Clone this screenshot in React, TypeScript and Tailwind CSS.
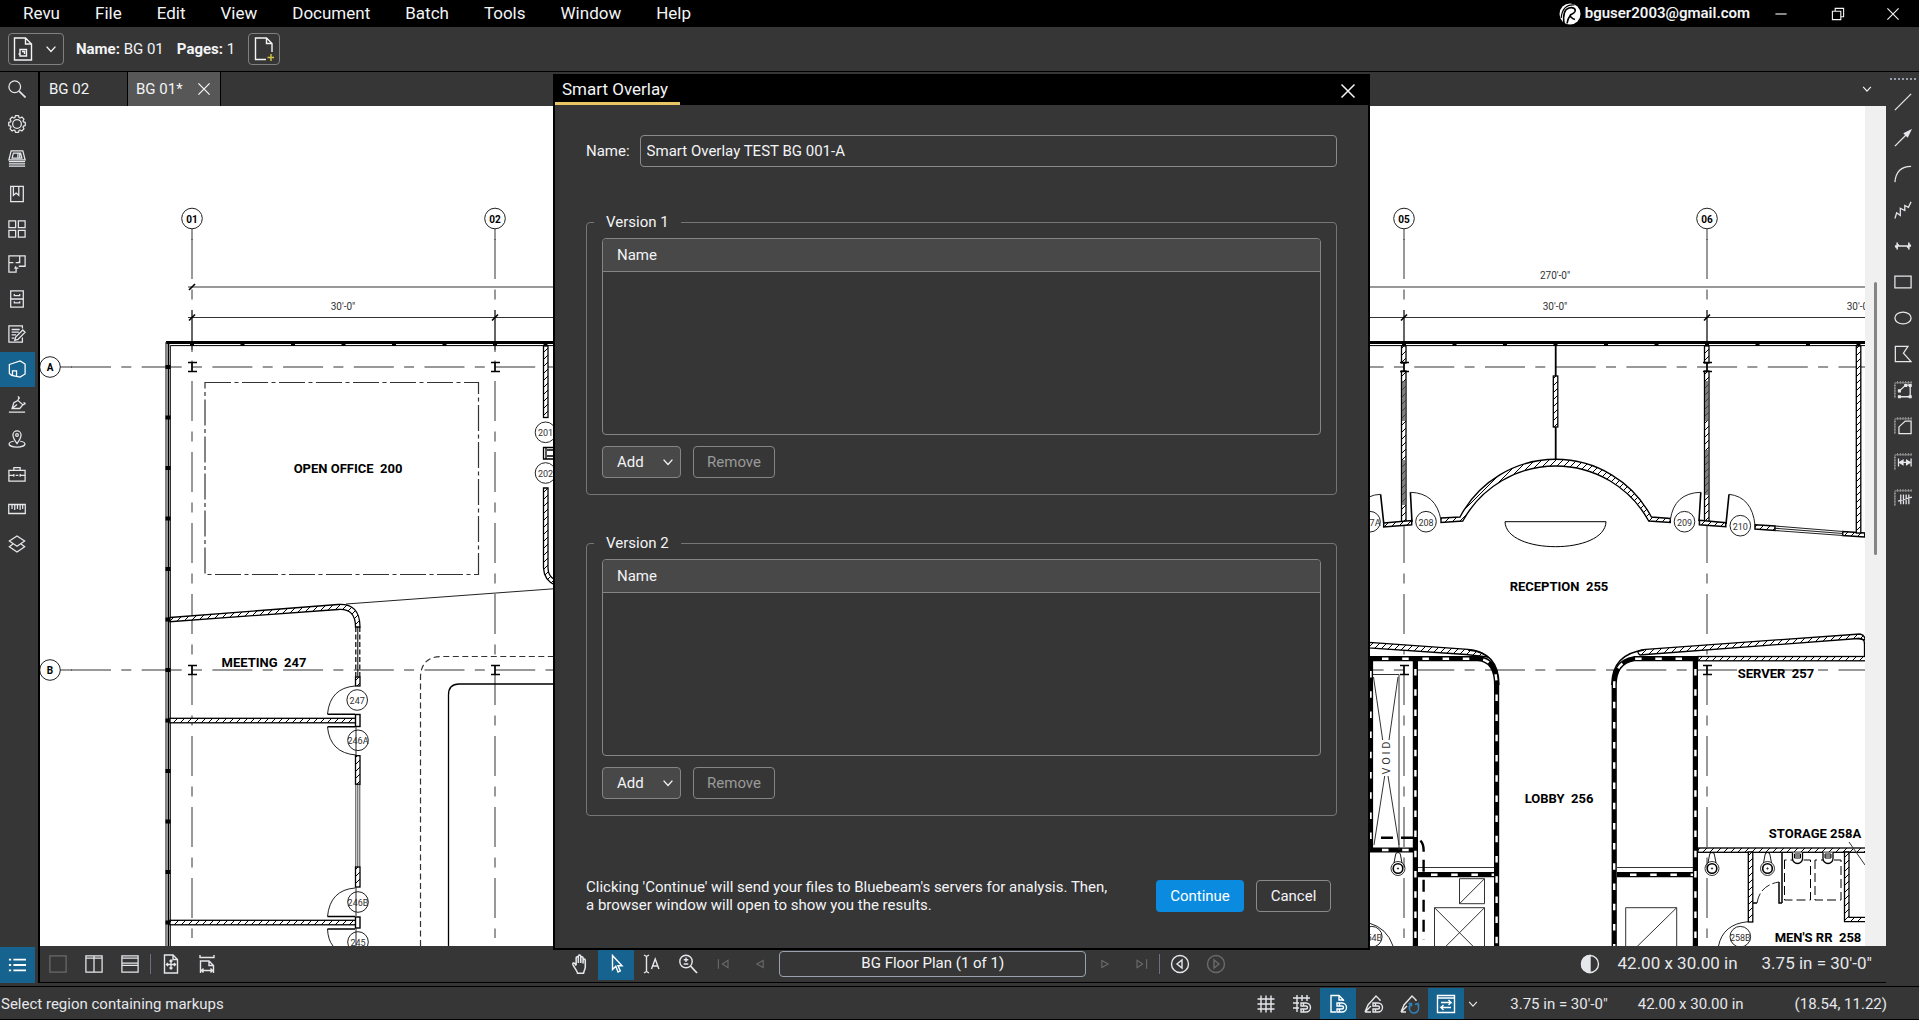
import React from "react";

type IconProps = { children: React.ReactNode; size?: number; sw?: number };

function Icon({ children, size = 20, sw = 1.4 }: IconProps) {
  return (
    <svg
      width={size}
      height={size}
      viewBox="0 0 20 20"
      fill="none"
      stroke="currentColor"
      strokeWidth={sw}
      aria-hidden="true"
      className="shrink-0"
    >
      {children}
    </svg>
  );
}

const Chevron = ({ size = 20 }: { size?: number }) => (
  <Icon size={size} sw={1.7}>
    <path d="M4.500 7l5.500 6L15.500 7" />
  </Icon>
);

const Cross = () => (
  <Icon sw={1.5}>
    <path d="M3.500 3.500l13 13M16.500 3.500l-13 13" />
  </Icon>
);

/* ---------- Panel icons (left rail) ---------- */

const panels: { name: string; icon: React.ReactNode; active?: boolean }[] = [
  { name: "Search", icon: <><circle cx="7.500" cy="7.500" r="6.500" /><path d="M12.300 12.300L19.500 19.500" strokeWidth="1.800" /></> },
  {
    name: "Properties",
    icon: (
      <>
        <circle cx="10" cy="10" r="4.800" />
        <path strokeLinejoin="round" d="M8.300 .8h3.400l.6 2.100 1 .4 2.100-1 2.300 2.300-1 2.100.4 1 2.100.6v3.400l-2.100.6-.4 1 1 2.100-2.300 2.300-2.100-1-1 .4-.6 2.100H8.300l-.6-2.100-1-.4-2.100 1-2.300-2.300 1-2.100-.4-1L.8 11.700V8.300l2.100-.6.4-1-1-2.100 2.300-2.300 2.100 1 1-.4z" />
      </>
    ),
  },
  { name: "File Access", icon: <><path d="M3.500 1h13l2.500 10H1z" /><path d="M6 3.500h8l1.500 5.500h-11zM11 4v5M13 4v5M1 13h18M1 15.500h18M1 18h18" /></> },
  { name: "Bookmarks", icon: <><path d="M3 1.500h14v17H3z" /><path d="M6 1.500v10l3-2.500 3 2.500v-10" /></> },
  { name: "Thumbnails", icon: <path d="M1 1h7.500v7.500H1zM11.500 1H19v7.500h-7.500zM1 11.500h7.500V19H1zM11.500 11.500H19V19h-7.500z" /> },
  { name: "Spaces", icon: <path d="M1 9V1h18v11.500h-7M1 8.500V19h8v-4.500h-2M1 8.500h5M8.500 8.500H13V1M12.500 8.500V7M8.500 12.500v2h3" /> },
  { name: "Sets", icon: <><path d="M3 1h14v18H3zM3 10h14" /><path d="M7 4.500v1.700h6V4.500M7 12.500v1.700h6v-1.700" /></> },
  { name: "Markups", icon: <><path d="M16 4V1H1v18h15v-5" /><path d="M4 5h9M4 8h8M4 11h5M4 14.500h3M16.500 5.500l2.500 2.500-8 8-3.500 1 1-3.500z" /></> },
  { name: "Compare", icon: <><path d="M1.500 5L13.500 1 19 4.500v11L13.500 19 4 17l-2.500-2z" /><path d="M5 17v-5h4.500v6" /></>, active: true },
  { name: "Signatures", icon: <path d="M1 19h18M4.500 15L6.500 8.500 11 6l5.500 5L13 15zM4.500 15l5.500-4.500M11 6l1.500-4M11 1.500L13 4M16.500 11l3-2M17.500 8l1.500 2.500" /> },
  { name: "Places", icon: <><path d="M10 15C7 11 5.500 9 5.500 5.500a4.500 4.500 0 019 0C14.500 9 13 11 10 15z" /><circle cx="10" cy="5.500" r="1.500" /><path d="M6.500 12.500c-3 .4-5.300 1.300-5.300 3 0 2 4 3.500 8.800 3.500s8.800-1.500 8.800-3.500c0-1.700-2.300-2.600-5.300-3" /></> },
  { name: "Tool Chest", icon: <path d="M1 6h18v12H1zM6.500 6V3h7v3M1 11.500h5M8.500 11.500h3M13.500 11.500H19M6.500 10v3M13.500 10v3" /> },
  { name: "Measurements", icon: <path d="M.8 5h18.400v10H.8zM4.500 5v5M7.500 5v6M10.500 5v5M13.500 5v6M16.300 5v5" /> },
  { name: "Layers", icon: <><path d="M10 1l8.500 5.700L10 12.500 1.500 6.700z" /><path d="M5.500 10L1.500 13l8.500 6 8.500-6-4-3" /></> },
];

function LeftRail() {
  return (
    <nav aria-label="Panels" className="flex w-10 shrink-0 flex-col border-r-2 border-black bg-[#363636] text-gray-200">
      {panels.map((p) => (
        <button
          key={p.name}
          aria-label={p.name}
          className={
            p.active
              ? "flex h-[35px] w-[35px] shrink-0 items-center justify-center bg-[#17638f] pr-0.5 pb-0.5 text-white"
              : "flex h-[35px] w-[35px] shrink-0 items-center justify-center pr-0.5 pb-0.5"
          }
        >
          <Icon size={18}>{p.icon}</Icon>
        </button>
      ))}
      <button aria-label="Markups list" className="mt-auto flex h-9 w-[35px] items-center justify-center bg-[#17638f] pr-0.5 text-white">
        <Icon size={18} sw={2}>
          <path d="M6 4h14M6 10h14M6 16h14M1 4h2.500M1 10h2.500M1 16h2.500" />
        </Icon>
      </button>
    </nav>
  );
}

/* ---------- Markup tools (right rail) ---------- */

const ruler = (
  <path stroke="#9a9a9a" strokeWidth="1" d="M1 19V2h19M0 5h2M0 8h2M0 11h2M0 14h2M0 17h2M4 0v3M7 0v3M10 0v3M13 0v3M16 0v3M19 0v3" />
);

const tools: { name: string; icon: React.ReactNode }[] = [
  { name: "Line", icon: <path d="M1 19L19 1" /> },
  { name: "Arrow", icon: <><path d="M1 19L15 5" /><path fill="currentColor" d="M18.500 1.500l-7 3.500 3.500 3.500z" /></> },
  { name: "Arc", icon: <path d="M1 19C2 8 8 1.500 19 1.500" /> },
  { name: "Polyline", icon: <path d="M1 19.500l2-6.500 4 3V8l5 2.500V5l4 2 3-6" /> },
  { name: "Dimension", icon: <path strokeWidth="1.700" d="M1 10h18M3.500 6v8M16.500 6v8M1.500 11.500l4-3M14.500 11.500l4-3" /> },
  { name: "Rectangle", icon: <path d="M1 3.500h18v13H1z" /> },
  { name: "Ellipse", icon: <ellipse cx="10" cy="10" rx="9" ry="6.500" /> },
  { name: "Polygon", icon: <path d="M1.500 1.500h14l-5 7.500 8.500 9.500H1.500z" /> },
  { name: "Perimeter", icon: <>{ruler}<path d="M6 11l7-6.500h5v13H6" /><path fill="currentColor" d="M5 10h2v2H5zM12 4h2v2h-2zM17 4h2v2h-2zM17 16.500h2v2h-2zM5 16.500h2v2H5z" /></> },
  { name: "Area", icon: <>{ruler}<path d="M5.500 18.500V11l7-6.500h6.500v14z" /></> },
  { name: "Length", icon: <>{ruler}<path d="M5 6v9M19 6v9M6 10.500h12" /><path fill="currentColor" d="M6 10.500l4-2.500v5zM18 10.500l-4-2.500v5z" /></> },
  { name: "Count", icon: <>{ruler}<path d="M7.500 6v11M10.500 6v11M13.500 6v11M16.500 6v11M4.500 13.500L20 9" /></> },
];

function RightRail() {
  return (
    <aside aria-label="Tools" className="flex w-[33px] shrink-0 flex-col items-center bg-[#363636] pt-1.5 text-gray-200">
      <div className="w-[26px] border-t-2 border-dotted border-gray-400" />
      <div className="mt-1 flex flex-col">
        {tools.map((t) => (
          <button key={t.name} aria-label={t.name} className="flex h-9 w-[33px] items-center justify-center">
            <Icon size={18}>{t.icon}</Icon>
          </button>
        ))}
      </div>
    </aside>
  );
}

/* ---------- Floor plan drawing ---------- */

const HATCH = "url(#hatch)";

function HWall({ x, y, w, h }: { x: number; y: number; w: number; h: number }) {
  return <rect x={x} y={y} width={w} height={h} fill={HATCH} stroke="#000" strokeWidth="1.300" />;
}

function RatedWall({ d }: { d: string }) {
  return (
    <>
      <path d={d} stroke="#000" strokeWidth="5.200" fill="none" />
      <path d={d} stroke="#fff" strokeWidth="2.400" strokeDasharray="6.500 13.700" strokeDashoffset="-13" fill="none" />
    </>
  );
}

function Bubble({ x, y, label, bold }: { x: number; y: number; label: string; bold?: boolean }) {
  return (
    <>
      <circle cx={x} cy={y} r="10.300" fill={bold ? "#fff" : "none"} stroke="#222" strokeWidth="1" />
      <text x={x} y={y + 4} textAnchor="middle" fontSize={bold ? 10 : 9} fontWeight={bold ? 700 : 400} fill={bold ? "#000" : "#333"}>
        {label}
      </text>
    </>
  );
}

function Column({ x, y }: { x: number; y: number }) {
  return <path d={`M${x - 4} ${y - 4.5}h9M${x - 4} ${y + 4.5}h9M${x} ${y - 4.5}v9`} stroke="#000" strokeWidth="1.600" fill="none" />;
}

function Label({ x, y, children }: { x: number; y: number; children: string }) {
  return (
    <text x={x} y={y} textAnchor="middle" fontSize="13" fontWeight="700" fill="#000" xmlSpace="preserve" className="whitespace-pre">
      {children}
    </text>
  );
}

function Fixture({ x }: { x: number }) {
  return (
    <g fill="none" stroke="#000">
      <circle cx={x} cy="868.500" r="7" strokeWidth=".8" />
      <circle cx={x} cy="868.500" r="4.800" strokeWidth="1.600" />
      <circle cx={x} cy="868.500" r=".6" />
      <path d={`M${x - 4} 863l1.500-8a2.500 2.500 0 015 0l1.500 8`} strokeWidth=".9" />
    </g>
  );
}

function Urinal({ x }: { x: number }) {
  return (
    <g fill="none" stroke="#000">
      <path d={`M${x - 13} 860v40h26v-40z`} strokeDasharray="9 4" />
      <path d={`M${x - 5} 852.500v6a5 5 0 0010 0v-6`} strokeWidth="1.300" fill="#fff" />
      <path d={`M${x - 3} 854h6v4h-6zM${x - 3} 856h6`} />
    </g>
  );
}

function FloorPlan() {
  const gridX = [192, 495, 1404, 1707];
  const topMullions = Array.from({ length: 34 }, (_, i) => 192 + i * 50.5);
  const leftMullions = Array.from({ length: 12 }, (_, i) => 367 + i * 50.5);
  return (
    <svg
      width="1825"
      height="840"
      viewBox="40 106 1825 840"
      fontFamily="Roboto, sans-serif"
      role="img"
      aria-label="BG Floor Plan"
      className="block max-w-none shrink-0"
    >
      <defs>
        <pattern id="hatch" width="7" height="7" patternUnits="userSpaceOnUse">
          <rect width="7" height="7" fill="#fff" />
          <path d="M-1 8L8 -1M-1 1L1 -1M6 8L8 6" stroke="#000" strokeWidth="1" />
        </pattern>
      </defs>

      {/* Structural grid */}
      <g stroke="#333" strokeWidth="1" fill="none">
        {gridX.map((x) => (
          <React.Fragment key={x}>
            <path d={`M${x} 229V240M${x} 310V352`} />
            <path d={`M${x} 239V938`} strokeDasharray="40 10.500 10 10.500" />
          </React.Fragment>
        ))}
        {[367, 670].map((y) => (
          <React.Fragment key={y}>
            <path d={`M60 ${y}H72`} />
            <path d={`M71 ${y}H1865`} strokeDasharray="40 10.300 10 10.400" />
          </React.Fragment>
        ))}
        <path d="M188 287H1865M188 317.500H1865" />
      </g>
      <g stroke="#000" strokeWidth="1.600">
        <path d="M189 290l6-6" />
        {gridX.map((x) => (
          <path key={x} d={`M${x - 3} 320.500l6-6`} />
        ))}
      </g>
      <Bubble x={192} y={218.5} label="01" bold />
      <Bubble x={495} y={218.5} label="02" bold />
      <Bubble x={1404} y={218.5} label="05" bold />
      <Bubble x={1707} y={218.5} label="06" bold />
      <Bubble x={50} y={367} label="A" bold />
      <Bubble x={50} y={670} label="B" bold />
      <g fontSize="10" fill="#333" textAnchor="middle">
        <text x="343" y="310">30'-0"</text>
        <text x="1555" y="279">270'-0"</text>
        <text x="1555" y="310">30'-0"</text>
        <text x="1859" y="310">30'-0"</text>
      </g>

      {/* Exterior walls */}
      <path d="M166 342.500H1865" stroke="#000" strokeWidth="3" />
      <path d="M170 345.600H1865" stroke="#000" strokeWidth="1" />
      <path d="M166 342V946" stroke="#333" strokeWidth="1.200" />
      <path d="M168.500 342V946" stroke="#000" strokeWidth="1.800" />
      <path d="M170.500 345V946" stroke="#333" strokeWidth="1" />
      {topMullions.map((x) => (
        <rect key={x} x={x - 2} y="341" width="4" height="5" />
      ))}
      {leftMullions.map((y) => (
        <rect key={y} x="165.500" y={y - 2} width="5" height="4" />
      ))}

      {/* Open office */}
      <path d="M205 382.500H478.500V574.500H205z" fill="none" stroke="#333" strokeWidth="1.200" strokeDasharray="26 3.500 4 3.500" />
      <Label x={348} y={473}>OPEN OFFICE  200</Label>
      <HWall x={543.5} y={346} w={4.5} h={71.5} />
      <Bubble x={545.5} y={432.3} label="201" />
      <Bubble x={545.5} y={473} label="202" />
      <path d="M543.500 447.500h11v11.500h-11zM547 450h8M547 456h8M546 447v12" fill="none" stroke="#000" strokeWidth="1.300" />
      <path d="M543.500 488V568Q544 580 555 585L555 580Q548 576 548 568V488z" fill={HATCH} stroke="#000" strokeWidth="1.300" />

      {/* Meeting room and offices */}
      <path d="M346 604L555 588.700" stroke="#222" />
      <path d="M170 617.500L338 604.500Q360 603 360 627H355.500Q355.500 608 338 609.500L170 621.700z" fill={HATCH} stroke="#000" strokeWidth="1.300" />
      <path d="M355.800 627V677M359.800 627V677" stroke="#000" strokeWidth="1.200" strokeDasharray="5 2.500" />
      <path d="M357.800 627V677" stroke="#000" />
      <HWall x={355.5} y={677} w={4.5} h={9} />
      <Label x={264} y={667}>MEETING  247</Label>
      <HWall x={170} y={718.3} w={186} h={4.5} />
      <HWall x={170} y={920.3} w={186} h={4.5} />
      <rect x="355.500" y="714.500" width="4.500" height="12" fill="#fff" stroke="#000" strokeWidth="1.400" />
      <rect x="355.500" y="917" width="4.500" height="11" fill="#fff" stroke="#000" strokeWidth="1.400" />
      <g fill="none" stroke="#222" strokeWidth="1">
        <path d="M355 686Q330 688 327.500 714" />
        <path d="M327.500 727Q330 753 356 755" />
        <path d="M355 888Q330 890 327.500 916.500" />
        <path d="M327.500 929Q328 940 333 946" />
        <path d="M356 727V755M356 887V916M356 928V946" />
        <path d="M355.800 784V867M357.800 784V867M359.800 784V867" stroke="#444" />
      </g>
      <path d="M327.500 714.300H355M327.500 726.800H355M327.500 916.500H355M327.500 929H355" stroke="#000" strokeWidth="1.600" />
      <HWall x={355.5} y={755.7} w={4.5} h={28.5} />
      <HWall x={355.5} y={867} w={4.5} h={20} />
      <Bubble x={357.2} y={700} label="247" />
      <Bubble x={358} y={740.3} label="246A" />
      <Bubble x={358} y={902} label="246B" />
      <Bubble x={358} y={942} label="245" />
      <path d="M420.500 946V677Q421 657 441 656.500H555" fill="none" stroke="#333" strokeWidth="1.200" strokeDasharray="6 3.500" />
      <path d="M448.500 946V695Q448.500 684 459 684H555" fill="none" stroke="#000" strokeWidth="1.300" />

      {/* Reception */}
      <HWall x={1401.5} y={346} w={4.5} h={17} />
      <HWall x={1401.5} y={371} w={4.5} h={151} />
      <HWall x={1704.5} y={346} w={4.5} h={17} />
      <HWall x={1704.5} y={371} w={4.5} h={151} />
      <g fill="#555" fillOpacity=".75">
        <path d="M1402 381h4v40h-4zM1402 460h4v45h-4zM1705 381h4v40h-4zM1705 450h4v45h-4z" />
      </g>
      <path d="M1555.700 346V460" stroke="#000" strokeWidth="1.800" />
      <HWall x={1553.3} y={376} w={4.5} h={51} />
      <path
        d="M1441 518L1460 517A108.200 108.200 0 011651.400 517L1670.300 518.500V522.500L1648.700 521A106 106 0 001462.800 521L1441 522.500z"
        fill={HATCH}
        stroke="#000"
        strokeWidth="1.400"
      />
      <path d="M1383.700 523L1411.700 520.500V524.700L1383.700 527z" fill={HATCH} stroke="#000" strokeWidth="1.500" />
      <path d="M1699.400 520.300L1725.800 522.700V526.800L1699.400 524.700z" fill={HATCH} stroke="#000" strokeWidth="1.500" />
      <path d="M1755 524.700L1775 526V530.500L1755 529zM1842.700 531.500L1864.700 533V537L1842.700 535.500z" fill={HATCH} stroke="#000" strokeWidth="1.500" />
      <path d="M1775 526L1843 531.500M1775 528.200L1843 533.500M1775 530.500L1843 535.500" stroke="#222" strokeWidth="1.100" />
      <HWall x={1856.3} y={346} w={4.5} h={187} />
      <path d="M1380.600 494.300L1383.700 523M1410.400 492.300L1412 522M1700.800 492.300L1699 521M1729 494.300L1726 524" stroke="#000" strokeWidth="1.600" />
      <g fill="none" stroke="#222" strokeWidth="1">
        <path d="M1380.600 494.300Q1374 494.500 1369 497M1410.400 492.300Q1436 493 1441 520M1670.300 520Q1674 493 1700.800 492.300M1729 494.300Q1752 497 1755 525" />
        <path d="M1505 521.700H1606C1605 555 1506 555 1505 521.700z" stroke="#000" />
      </g>
      <Bubble x={1370} y={521.7} label="207A" />
      <Bubble x={1426} y={521.7} label="208" />
      <Bubble x={1684.5} y={521.7} label="209" />
      <Bubble x={1740.3} y={525.7} label="210" />
      <Label x={1559} y={591}>RECEPTION  255</Label>

      {/* Lobby core */}
      <path d="M1369 642.300L1468 649.300Q1480 650 1488 657L1466 654.500L1369 648z" fill={HATCH} stroke="#000" strokeWidth="1.300" />
      <path d="M1640 655Q1634 650 1646 649.300L1860 634Q1865 635 1865 640L1858 638.500L1646 654.500z" fill={HATCH} stroke="#000" strokeWidth="1.300" />
      <path d="M1858 638.500Q1864.500 638 1864.500 644V657" fill="none" stroke="#000" strokeWidth="1.300" />
      <HWall x={1698} y={656.5} w={170} h={4.3} />
      <RatedWall d="M1369 658.700H1478Q1496.600 660 1496.600 685V946" />
      <RatedWall d="M1695 658.700H1634Q1614.200 662 1614.200 685V946" />
      <path d="M1468 650Q1499 652 1499 685M1644 650Q1612 654 1611.700 685" fill="none" stroke="#000" strokeWidth="1.300" />
      <RatedWall d="M1370.500 658V850" />
      <RatedWall d="M1369 850H1413" />
      <RatedWall d="M1415.400 656V946" />
      <RatedWall d="M1695.400 656V946" />
      <RatedWall d="M1418 874.700H1494" />
      <RatedWall d="M1617 874.700H1693" />
      <g fill="none" stroke="#333" strokeWidth="1">
        <path d="M1373 674.500H1399V850M1373.500 677L1382.700 740M1398 677L1389 740M1384.700 776L1374 845M1388 776L1399 845" />
        <path d="M1418 867.500H1494M1617 867.500H1693" />
        <path d="M1459.500 878.700h25v25h-25zM1459.500 903.700l25-25M1434.500 907.700h50v50h-50zM1434.500 907.700l50 50M1484.500 907.700l-50 50M1625.700 907.700h51v50h-51zM1625.700 957.700l51-50" />
      </g>
      <text transform="translate(1390 758) rotate(-90)" textAnchor="middle" fontSize="11" fill="#333">
        V O I D
      </text>
      <path d="M1381 837.700H1412Q1423.600 838 1423.600 850V940" fill="none" stroke="#000" strokeWidth="2.400" strokeDasharray="12 8" />
      <Label x={1559} y={803}>LOBBY  256</Label>
      <Label x={1776} y={678}>SERVER  257</Label>

      {/* Restrooms */}
      <HWall x={1698} y={848} w={170} h={4.3} />
      <HWall x={1748.3} y={852} w={4.5} h={70} />
      <path d="M1844.500 852H1849V917.300H1866V921.700H1844.500z" fill={HATCH} stroke="#000" strokeWidth="1.300" />
      <path d="M1782 853V903M1779 882V903H1782M1753 903h4" fill="none" stroke="#000" strokeWidth="1.500" />
      <path d="M1757 903Q1760 885 1779 882" fill="none" stroke="#222" strokeDasharray="10 3" />
      <Fixture x={1398} />
      <Fixture x={1712} />
      <Fixture x={1767.5} />
      <Urinal x={1797.5} />
      <Urinal x={1828} />
      <path d="M1849 842L1865 865" stroke="#333" />
      <path d="M1718.500 946Q1723 924 1748 921.700M1369 923Q1387 928 1393 946" fill="none" stroke="#222" />
      <Bubble x={1740.3} y={936.7} label="258B" />
      <Bubble x={1371.8} y={936.7} label="254B" />
      <Label x={1815} y={838}>STORAGE 258A</Label>
      <Label x={1818} y={942}>MEN'S RR  258</Label>

      {gridX.map((x) => (
        <React.Fragment key={x}>
          <Column x={x} y={367} />
          <Column x={x} y={670} />
        </React.Fragment>
      ))}
    </svg>
  );
}

/* ---------- Document view bar ---------- */

function BarButton({ label, children, state }: { label: string; children: React.ReactNode; state?: "on" | "off" }) {
  return (
    <button
      aria-label={label}
      disabled={state === "off"}
      className={
        state === "on"
          ? "flex h-8 w-9 items-center justify-center bg-[#17638f] text-white"
          : state === "off"
            ? "flex h-8 w-9 items-center justify-center text-[#6a6a6a]"
            : "flex h-8 w-9 items-center justify-center text-gray-200"
      }
    >
      {children}
    </button>
  );
}

function ViewBar() {
  return (
    <div className="flex h-9 shrink-0 items-center justify-between bg-[#363636] pr-3.5">
      <div className="flex items-center">
        <BarButton label="Single view" state="off"><Icon size={18}><path d="M1 1h18v18H1z" /></Icon></BarButton>
        <BarButton label="Split vertical"><Icon size={18}><path d="M1 1h18v18H1zM10 1v18M1 3.500h18" /></Icon></BarButton>
        <BarButton label="Split horizontal"><Icon size={18}><path d="M1 1h18v18H1zM1 9h18M1 11.500h18M1 3.500h18" /></Icon></BarButton>
        <div className="mx-0.5 h-5 w-px bg-gray-500" />
        <BarButton label="Fit page"><Icon><path d="M3.500 1H12l4.500 4.500V19h-13zM12 1v4.500h4.500" /><path d="M10 6v9M5.500 10.500h9M8.500 7.500L10 6l1.500 1.500M8.500 13.500L10 15l1.500-1.500M7 9l-1.500 1.500L7 12M13 9l1.500 1.500L13 12" /></Icon></BarButton>
        <BarButton label="Fit width"><Icon><path d="M3 1v2.500h14V1M3.500 19V7H12l4.500 4.500V19M12 7v4.500h4.500M4 16.500h12M6.500 14.500L4.500 16.500l2 2M13.500 14.500l2 2-2 2" /></Icon></BarButton>
      </div>

      <div className="flex items-center">
        <BarButton label="Pan"><Icon size={22}><path strokeLinejoin="round" d="M6.500 11V4.500c0-1.500 2-1.500 2 0V3c0-1.500 2.200-1.500 2.200 0v1.500c0-1.500 2.100-1.500 2.100 0V6.500c0-1.400 2-1.400 2 0V13c0 2-1.500 3-1.500 5.500h-5.500C7.500 16 5 14 3.500 10.500c-.5-1.500 1.200-1.800 2-.7L6.500 11.500M8.500 4.500V9M10.700 4.500V9M12.800 6V9.500" /></Icon></BarButton>
        <BarButton label="Select" state="on"><Icon><path d="M6.500 1.500v14l3.300-3.200 2.200 5.700 2.300-1-2.300-5.200h4z" /></Icon></BarButton>
        <BarButton label="Select text">
          <Icon>
            <path d="M2 1l2.500 1.500L7 1M4.500 2.500v15M2 19l2.500-1.500L7 19" />
            <path d="M9.500 15l3.700-10 3.700 10M10.700 12h5" />
          </Icon>
        </BarButton>
        <BarButton label="Zoom"><Icon><circle cx="8" cy="7.500" r="6.200" /><path d="M12.500 12L19 19" strokeWidth="1.800" /><path d="M8 3.500v4.500M5.700 5.700h4.600M5.700 10h4.600" /></Icon></BarButton>
        <BarButton label="First page" state="off"><Icon size={16}><path d="M3 4v12M15 5.500v9L8 10z" /></Icon></BarButton>
        <BarButton label="Previous page" state="off"><Icon size={16}><path d="M14 5.500v9L6 10z" /></Icon></BarButton>
        <input
          aria-label="Page"
          readOnly
          value="BG Floor Plan (1 of 1)"
          className="mx-px h-[26px] w-[307px] rounded-sm border border-gray-400 bg-transparent px-1 pb-0.5 text-center text-[15px] text-gray-100 outline-none"
        />
        <BarButton label="Next page" state="off"><Icon size={16}><path d="M6 5.500v9L14 10z" /></Icon></BarButton>
        <BarButton label="Last page" state="off"><Icon size={16}><path d="M5 5.500v9L12 10zM17 4v12" /></Icon></BarButton>
        <div className="mr-0.5 h-5 w-px bg-gray-500" />
        <BarButton label="Previous view"><Icon><circle cx="10" cy="10" r="8.500" /><path d="M12 6v8L7 10z" /></Icon></BarButton>
        <BarButton label="Next view" state="off"><Icon><circle cx="10" cy="10" r="8.500" /><path d="M8 6v8l5-4z" /></Icon></BarButton>
      </div>

      <div className="flex items-center text-[17px] text-gray-200">
        <BarButton label="Dimmer"><Icon><circle cx="10" cy="10" r="8.500" /><path fill="currentColor" d="M10 1.500a8.500 8.500 0 000 17z" /></Icon></BarButton>
        <span className="ml-2.5">42.00 x 30.00 in</span>
        <span className="ml-6">3.75 in = 30'-0"</span>
      </div>
    </div>
  );
}

/* ---------- Status bar ---------- */

const magnet = <path d="M9 9h5a4.500 4.500 0 010 9H9v-3h5a1.500 1.500 0 000-3H9zM11.500 9v3M11.500 15v3" />;

function StatusBar() {
  return (
    <footer className="flex h-8 shrink-0 items-center bg-[#363636] pt-0.5 pr-8 pl-px text-[15px] text-gray-200">
      <span>Select region containing markups</span>
      <div className="ml-auto flex items-center">
        <BarButton label="Show grid"><Icon><path d="M5 1.500v17M10 1.500v17M15 1.500v17M1.500 5h17M1.500 10h17M1.500 15h17" /></Icon></BarButton>
        <BarButton label="Snap to grid"><Icon><path d="M5 1v17M10 1v6M15 1v6M1 4h17M1 9h6M1 14h6" />{magnet}</Icon></BarButton>
        <BarButton label="Snap to content" state="on"><Icon><path d="M8 18H3V1.500h8l4.500 4.500v1M11 1.500V6h4.500" />{magnet}</Icon></BarButton>
        <BarButton label="Snap to markup"><Icon><path d="M1 18l3-7 8-9 4 4v1M1 18h6M1 18l6-6" />{magnet}</Icon></BarButton>
        <BarButton label="Reuse"><Icon><path d="M1 18l3-7 8-9 4 4v1M1 18h5M1 18l6-6" /><path stroke="#2f86bd" d="M11 9.500c-3 3-2 9.500 3 9.500 4 0 5.500-4 4-8M8.500 9.500h3v3M15 10.500l3-1 1 3" /></Icon></BarButton>
        <BarButton label="Sync" state="on"><Icon><path d="M1.500 1.500h17v17h-17zM1.500 4h17M5 8.500h10l-2.500-2.500M15 13.500H5l2.500 2.500M12.500 11L15 8.500M7.500 11L5 13.500" /></Icon></BarButton>
        <button aria-label="Sync options" className="flex w-[18px] justify-center"><Chevron size={14} /></button>
      </div>
      <span className="ml-7">3.75 in = 30'-0"</span>
      <span className="ml-[30px]">42.00 x 30.00 in</span>
      <span className="ml-[51px]">(18.54, 11.22)</span>
    </footer>
  );
}

/* ---------- Dialog ---------- */

function VersionGroup({ title }: { title: string }) {
  return (
    <fieldset className="mx-0 rounded-sm border border-[#757575] px-[15px] pb-4">
      <legend className="ml-[-8px] px-3 leading-5">{title}</legend>
      <div className="mt-1.5 h-[197px] overflow-hidden rounded-sm border border-[#858585]">
        <table className="w-full border-collapse text-left">
          <thead>
            <tr>
              <th scope="col" className="h-8 border-b border-[#858585] bg-[#484848] px-3.5 font-normal">Name</th>
            </tr>
          </thead>
          <tbody />
        </table>
      </div>
      <div className="mt-[11px] flex gap-3">
        <button className="flex h-8 w-[79px] items-center justify-between rounded-sm border border-[#858585] bg-[#484848] pr-1 pl-3.5">
          Add
          <Chevron size={16} />
        </button>
        <button disabled className="h-8 w-[82px] rounded-sm border border-[#858585] text-[#9a9a9a]">Remove</button>
      </div>
    </fieldset>
  );
}

function SmartOverlayDialog() {
  return (
    <div
      role="dialog"
      aria-labelledby="dialog-title"
      className="pointer-events-auto w-[817px] border-2 border-t border-black bg-[#363636] text-[15px] text-gray-100"
    >
      <div className="flex h-[30px] items-stretch justify-between bg-black pr-1.5">
        <h1 id="dialog-title" className="border-b-3 border-[#e9c664] pt-px pr-3 pl-[7px] text-[17px] leading-[26px]">Smart Overlay</h1>
        <button aria-label="Close" className="flex w-7 items-center justify-center pt-0.5"><Cross /></button>
      </div>
      <form className="px-[31px] pt-[30px] pb-[34px]" onSubmit={(e) => e.preventDefault()}>
        <div className="flex items-center gap-2.5">
          <label htmlFor="overlay-name">Name:</label>
          <input
            id="overlay-name"
            defaultValue="Smart Overlay TEST BG 001-A"
            className="h-8 min-w-0 flex-1 rounded-sm border border-[#8a8a8a] bg-transparent px-1.5 outline-none"
          />
        </div>
        <div className="mt-[45px] flex flex-col gap-[38px]">
          <VersionGroup title="Version 1" />
          <VersionGroup title="Version 2" />
        </div>
        <div className="mt-[62px] flex items-center">
          <p className="w-[570px] leading-[18px]">
            Clicking 'Continue' will send your files to Bluebeam's servers for analysis. Then,
            <br />a browser window will open to show you the results.
          </p>
          <button className="h-8 w-[88px] rounded-sm bg-[#0a8be0] text-white">Continue</button>
          <button type="button" className="ml-3 h-8 w-[75px] rounded-sm border border-[#8a8a8a]">Cancel</button>
        </div>
      </form>
    </div>
  );
}

/* ---------- Application shell ---------- */

const menus = ["Revu", "File", "Edit", "View", "Document", "Batch", "Tools", "Window", "Help"];

export default function App() {
  return (
    <div className="relative flex h-screen flex-col overflow-hidden bg-black font-[Roboto,sans-serif] text-gray-100">
      <header className="flex h-[27px] shrink-0 items-center bg-black pl-1.5 text-[17px]">
        <nav className="flex gap-px" aria-label="Main menu">
          {menus.map((m) => (
            <button key={m} className="px-[17px]">{m}</button>
          ))}
        </nav>
        <div className="ml-auto flex items-center gap-1">
          <svg width="22" height="22" viewBox="0 0 22 22" aria-hidden="true">
            <circle cx="11" cy="11" r="10.500" fill="#fff" />
            <path d="M5 20.500C4 13 5 6.500 10 5c4-1 7 .5 6 3.500-.8 2-3 2.500-5 3.500M11.500 12c-1.500 2-3 4-3.500 8.500M11 13c1.500 1.500 2 3 5 3.500" fill="none" stroke="#000" strokeWidth="1.600" />
            <path d="M15.500 2C8 1.500 3 6 2.200 15" fill="none" stroke="#000" strokeWidth="1.200" />
          </svg>
          <span className="text-[15px] font-semibold">bguser2003@gmail.com</span>
        </div>
        <div className="ml-0.5 flex">
          <button aria-label="Minimize" className="flex w-[57px] justify-center"><Icon size={16}><path d="M3 10h14" /></Icon></button>
          <button aria-label="Restore" className="flex w-[57px] justify-center"><Icon size={16}><path d="M3 6.500h10.500V17H3zM6.500 6.500V3H17v10.500h-3.500" /></Icon></button>
          <button aria-label="Close window" className="flex w-[53px] justify-center"><Icon size={16}><path d="M3 3l14 14M17 3L3 17" /></Icon></button>
        </div>
      </header>

      <div className="flex h-11 shrink-0 items-center bg-[#363636] pl-2 text-[15px]">
        <button aria-label="Page setup" className="flex h-8 w-14 items-center justify-between rounded-sm border border-[#808080] pr-1 pl-1">
          <svg width="20" height="24" viewBox="0 0 20 24" fill="none" stroke="currentColor" strokeWidth="1.400" aria-hidden="true">
            <path d="M1.500 1h11l6 6v16h-17zM12.500 1v6h6M7 12.500h6.500V19H7zM9 14.500h2.500V17M7 17H5.500" />
          </svg>
          <Chevron size={16} />
        </button>
        <span className="ml-3"><b>Name:</b> BG 01</span>
        <span className="ml-[13px]"><b>Pages:</b> 1</span>
        <button aria-label="Add page" className="ml-[13px] flex h-8 w-8 items-center justify-center rounded-sm border border-[#808080]">
          <svg width="20" height="24" viewBox="0 0 20 24" fill="none" stroke="currentColor" strokeWidth="1.400" aria-hidden="true">
            <path d="M12 22.500H1.500V1h11l5.500 5.500V15M12.500 1v5.500H18" />
            <path stroke="#cfc53f" d="M17 17v7M13.500 20.500h7" />
          </svg>
        </button>
      </div>

      <div className="mt-px flex min-h-0 flex-1">
        <LeftRail />
        <main className="flex min-w-0 flex-1 flex-col border-b border-black">
          <div className="flex h-[34px] shrink-0 items-stretch bg-[#363636] text-[15px]">
            <button className="w-[88px] border-r border-black pl-[9px] text-left">BG 02</button>
            <button className="flex w-[93px] items-center justify-between border-r border-black bg-[#575757] pr-2 pl-2">
              BG 01*
              <Icon size={16} sw={1.6}><path d="M3 3l14 14M17 3L3 17" /></Icon>
            </button>
            <button aria-label="All documents" className="mr-3 ml-auto flex items-center"><Chevron size={14} /></button>
          </div>
          <div className="flex min-h-0 flex-1 bg-white">
            <div className="min-w-0 flex-1 overflow-hidden">
              <FloorPlan />
            </div>
            <div className="flex w-[21px] shrink-0 justify-center bg-[#f0f0f0] pt-44">
              <div className="h-[273px] w-[3px] rounded bg-[#858585]" />
            </div>
          </div>
          <ViewBar />
        </main>
        <RightRail />
      </div>
      <div className="h-1 shrink-0 border-b border-black bg-[#363636]" />
      <StatusBar />
      <div className="h-px shrink-0 bg-black" />

      <div className="pointer-events-none absolute inset-x-0 top-[74px] flex justify-center pl-1">
        <SmartOverlayDialog />
      </div>
    </div>
  );
}
